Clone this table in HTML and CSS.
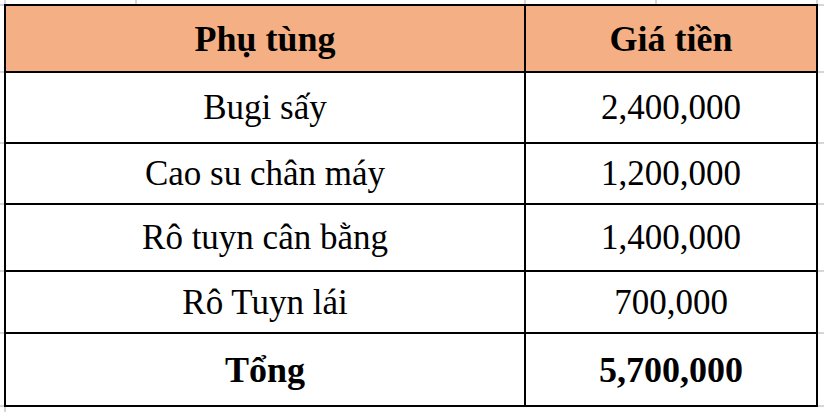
FILE: index.html
```html
<!DOCTYPE html>
<html lang="vi">
<head>
<meta charset="utf-8">
<title>Phụ tùng</title>
<link rel="stylesheet" href="styles.css">
</head>
<body>
<div class="sheet">
  <div class="table">
    <div class="cell head">Phụ tùng</div>
    <div class="cell head">Giá tiền</div>
    <div class="cell">Bugi sấy</div>
    <div class="cell">2,400,000</div>
    <div class="cell">Cao su chân máy</div>
    <div class="cell">1,200,000</div>
    <div class="cell">Rô tuyn cân bằng</div>
    <div class="cell">1,400,000</div>
    <div class="cell">Rô Tuyn lái</div>
    <div class="cell">700,000</div>
    <div class="cell total">Tổng</div>
    <div class="cell total">5,700,000</div>
  </div>
</div>
</body>
</html>
```
FILE: styles.css
```css
html, body {
  margin: 0;
  padding: 0;
  background: #fff;
}
.sheet {
  width: 824px;
  height: 412px;
  box-sizing: border-box;
  padding: 4px 0 0 4px;
  overflow: hidden;
  background-color: #fff;
  background-repeat: no-repeat;
  background-image:
    linear-gradient(#d6d6d6, #d6d6d6),
    linear-gradient(#d6d6d6, #d6d6d6),
    linear-gradient(#d6d6d6, #d6d6d6),
    linear-gradient(#d6d6d6, #d6d6d6),
    linear-gradient(#d6d6d6, #d6d6d6),
    linear-gradient(#d6d6d6, #d6d6d6),
    linear-gradient(#d6d6d6, #d6d6d6),
    linear-gradient(#d6d6d6, #d6d6d6),
    linear-gradient(#d6d6d6, #d6d6d6),
    linear-gradient(#d6d6d6, #d6d6d6),
    linear-gradient(#d6d6d6, #d6d6d6),
    linear-gradient(#d6d6d6, #d6d6d6);
  background-size:
    2px 100%, 2px 4px, 2px 4px, 2px 4px, 2px 4px,
    100% 2px, 100% 2px, 100% 2px, 100% 2px, 100% 2px, 100% 2px, 100% 2px;
  background-position:
    4px 0, 135px 0, 524px 0, 655px 0, 816px 0,
    0 4px, 0 71px, 0 142px, 0 203px, 0 270px, 0 332px, 0 405px;
}
.table {
  display: grid;
  grid-template-columns: 518px 290px;
  grid-template-rows: 65px 69px 59px 65px 60px 71px;
  gap: 2px;
  padding: 2px;
  background: #000;
  width: max-content;
}
.cell {
  background: #fff;
  display: flex;
  align-items: center;
  justify-content: center;
  font-family: "Liberation Serif", "Times New Roman", serif;
  font-size: 35px;
  color: #000;
  line-height: 1;
}
.head {
  background: #f4b084;
  font-weight: bold;
  font-size: 36px;
}
.total {
  font-weight: bold;
  font-size: 36px;
}
```
